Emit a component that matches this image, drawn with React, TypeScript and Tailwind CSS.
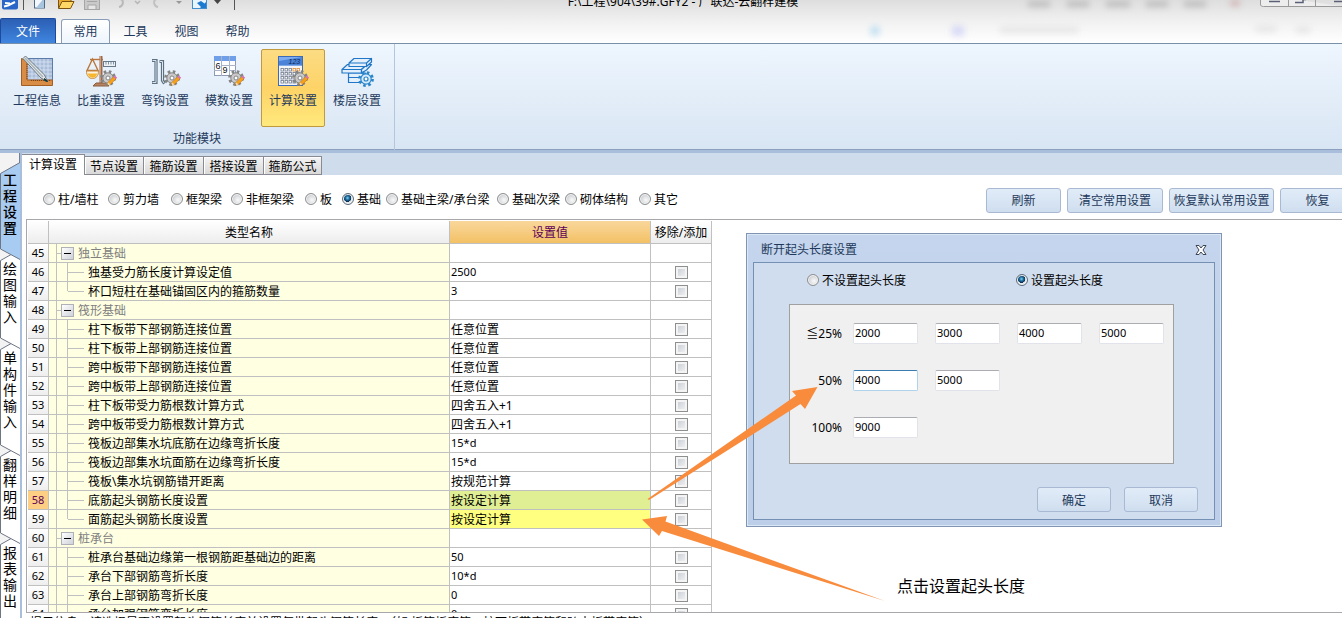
import { useState } from "react";
import type { ReactNode } from "react";
import { clsx } from "clsx";

const UI_FONT = "font-['Noto_Sans','Noto_Sans_CJK_SC',sans-serif]";

const MENU = ["常用", "工具", "视图", "帮助"];
const SUB_TABS = [
  { label: "计算设置", width: "w-[63px]" },
  { label: "节点设置", width: "w-[59px]" },
  { label: "箍筋设置", width: "w-[60px]" },
  { label: "搭接设置", width: "w-[60px]" },
  { label: "箍筋公式", width: "w-[58px]" },
];
const CATEGORIES = [
  "柱/墙柱",
  "剪力墙",
  "框架梁",
  "非框架梁",
  "板",
  "基础",
  "基础主梁/承台梁",
  "基础次梁",
  "砌体结构",
  "其它",
];

const SIDE_TABS = [
  { label: "工程设置", height: 98 },
  { label: "绘图输入", height: 100 },
  { label: "单构件输入", height: 118 },
  { label: "翻样明细", height: 99 },
  { label: "报表输出", height: 110 },
];

type Row = {
  no: number;
  name: string;
  value?: string;
  group?: boolean;
  last?: boolean;
  mark?: "green" | "yellow";
};

const ROWS: Row[] = [
  { no: 45, name: "独立基础", group: true },
  { no: 46, name: "独基受力筋长度计算设定值", value: "2500" },
  { no: 47, name: "杯口短柱在基础锚固区内的箍筋数量", value: "3", last: true },
  { no: 48, name: "筏形基础", group: true },
  { no: 49, name: "柱下板带下部钢筋连接位置", value: "任意位置" },
  { no: 50, name: "柱下板带上部钢筋连接位置", value: "任意位置" },
  { no: 51, name: "跨中板带下部钢筋连接位置", value: "任意位置" },
  { no: 52, name: "跨中板带上部钢筋连接位置", value: "任意位置" },
  { no: 53, name: "柱下板带受力筋根数计算方式", value: "四舍五入+1" },
  { no: 54, name: "跨中板带受力筋根数计算方式", value: "四舍五入+1" },
  { no: 55, name: "筏板边部集水坑底筋在边缘弯折长度", value: "15*d" },
  { no: 56, name: "筏板边部集水坑面筋在边缘弯折长度", value: "15*d" },
  { no: 57, name: "筏板\\集水坑钢筋错开距离", value: "按规范计算" },
  { no: 58, name: "底筋起头钢筋长度设置", value: "按设定计算", mark: "green" },
  { no: 59, name: "面筋起头钢筋长度设置", value: "按设定计算", mark: "yellow", last: true },
  { no: 60, name: "桩承台", group: true },
  { no: 61, name: "桩承台基础边缘第一根钢筋距基础边的距离", value: "50" },
  { no: 62, name: "承台下部钢筋弯折长度", value: "10*d" },
  { no: 63, name: "承台上部钢筋弯折长度", value: "0" },
  { no: 64, name: "承台加强钢筋弯折长度", value: "0" },
];

/* ---------- small controls ---------- */

function Radio({
  label,
  name,
  checked,
  onChange,
}: {
  label: string;
  name: string;
  checked: boolean;
  onChange: () => void;
}) {
  return (
    <label className="flex items-center gap-[3px] whitespace-nowrap">
      <input
        type="radio"
        name={name}
        checked={checked}
        onChange={onChange}
        className="h-3 w-3 shrink-0 appearance-none rounded-full border border-[#8e8f8f] bg-[radial-gradient(circle_at_60%_60%,#f4f4f4_10%,#bcc1c8_90%)] shadow-[inset_0_0_0_1px_#f4f4f4] checked:border-[#5b6b7c] checked:bg-[radial-gradient(circle_at_45%_40%,#7fd3f2_0%,#1b6a9c_25%,#0c2f50_45%,#e6e9ec_50%)]"
      />
      <span className="pt-0.5">{label}</span>
    </label>
  );
}

function PushButton({ children, className }: { children: ReactNode; className?: string }) {
  return (
    <button
      type="button"
      className={clsx(
        "h-[25px] shrink-0 whitespace-nowrap rounded-[3px] border border-[#a9b9d3] bg-linear-to-b from-[#e1ecf8] to-[#cfdeef] pt-0.5 text-center text-[#1e395b]",
        className,
      )}
    >
      {children}
    </button>
  );
}

/* ---------- icons ---------- */

function Gear({
  cx,
  cy,
  color = "#858585",
  fill = "#c9c9c9",
}: {
  cx: number;
  cy: number;
  color?: string;
  fill?: string;
}) {
  return (
    <g>
      <circle cx={cx} cy={cy} r="6.4" fill="none" stroke={color} strokeWidth="3" strokeDasharray="2.5 2.53" />
      <circle cx={cx} cy={cy} r="5.2" fill={fill} stroke={color} />
      <circle cx={cx} cy={cy} r="2" fill="#fff" stroke={color} />
    </g>
  );
}

function Pencil() {
  return (
    <g>
      <path d="M22 29.5l1-3.2 5.6-5.6 2.3 2.3-5.6 5.6z" fill="#f6a01c" stroke="#a8620c" strokeWidth=".5" />
      <path d="M28.6 20.7l1.3-1.3 2.3 2.3-1.3 1.3z" fill="#d871b8" />
      <path d="M22 29.5l1-3.2 2.3 2.3z" fill="#f7dfb4" />
      <path d="M22 29.5l.4-1.3.9.9z" fill="#333" />
    </g>
  );
}

function ProjectIcon() {
  const lines = [11, 15, 19, 23, 27];
  return (
    <svg viewBox="0 0 32 32" className="h-8 w-8">
      <rect x="4.5" y="2.5" width="27" height="23" fill="#a9bddb" stroke="#5b7cab" />
      {lines.map((x) => (
        <path key={x} d={`M${x} 3v20M6 ${x - 5}h25`} stroke="#dbe5f3" strokeWidth=".8" />
      ))}
      <path d="M.5 2.5L6 5v19h25.5v5.500H.5z" fill="#d98c46" stroke="#a35f22" />
      <path d="M6 8v15M10 24.5h20" stroke="#7c4516" strokeDasharray="1 1" />
      <path d="M2 2.5L4.5 0l19 19 3 6.5-6.500-3.500z" fill="#e6eaec" stroke="#6a7880" />
      <path d="M4 2l18 19" stroke="#a9b4b9" strokeWidth="1.500" />
      <path d="M23.500 22.500l3 3-2.800-.8z" fill="#123a3d" stroke="#123a3d" />
    </svg>
  );
}

function WeightIcon() {
  return (
    <svg viewBox="0 0 32 32" className="h-8 w-8 overflow-visible">
      <path d="M7.500 3L2 14.500h11z" fill="none" stroke="#b8763a" strokeWidth="1.400" />
      <path d="M5 3.500h13" stroke="#b8763a" strokeWidth="1.400" />
      <path d="M1.500 15h12c0 5-2.500 7.500-6 7.500s-6-2.500-6-7.500z" fill="#fdf3dc" stroke="#c98a3c" />
      <path d="M2.700 17.500h9.600c-.8 3-2.600 4.200-4.800 4.200s-4-1.200-4.800-4.200z" fill="#f8b62d" />
      <path d="M16 0v27" stroke="#9c6a4d" strokeWidth="3" />
      <path d="M15.300 0v27" stroke="#dba98a" />
      <path d="M8 30l3-3h10l3 3z" fill="#b8835f" stroke="#8a5a3c" />
      <rect x="18.500" y="5.500" width="12" height="5" fill="#eef2f5" stroke="#66798a" />
      <path d="M21 6v2.500M23.500 6v2.500M26 6v2.500M28.500 6v2.500" stroke="#66798a" strokeWidth=".8" />
      <Gear cx={23} cy={22} />
      <Pencil />
    </svg>
  );
}

function HookIcon() {
  return (
    <svg viewBox="0 0 32 32" className="h-8 w-8 overflow-visible">
      <path d="M3 4.500h4v22H3" fill="none" stroke="#5d7183" strokeWidth="3.200" />
      <path d="M3.500 4.500h3.500v22H3.500" fill="none" stroke="#dde6ec" strokeWidth="1" />
      <path d="M10.500 5.500h3v19l2 3" fill="none" stroke="#5d7183" strokeWidth="3.200" />
      <path d="M11 5.500h2.500v19l1.500 2.500" fill="none" stroke="#dde6ec" strokeWidth="1" />
      <Gear cx={23} cy={22} />
      <Pencil />
    </svg>
  );
}

function ModulusIcon() {
  return (
    <svg viewBox="0 0 32 32" className="h-8 w-8 overflow-visible">
      <rect x="1.500" y=".5" width="21" height="19" fill="#fff" stroke="#8f9bb3" />
      <path d="M1 0h22v5H1z" fill="#6f9fe8" />
      <path d="M8.500 0v20M16.500 0v20M1 9.500h22M1 14.500h22" stroke="#a9b4c9" />
      <rect x="2" y="5" width="6" height="9" fill="#fff" />
      <rect x="9" y="10" width="7" height="9" fill="#fff" />
      <text x="2.500" y="12.500" fontSize="9" fill="#111" fontFamily="Liberation Sans">
        6
      </text>
      <text x="9.500" y="17" fontSize="9" fill="#111" fontFamily="Liberation Sans">
        9
      </text>
      <Gear cx={23} cy={22} />
      <Pencil />
    </svg>
  );
}

function CalcIcon() {
  const cols = [4, 8, 12, 16, 20];
  const rows = [12.5, 16.5, 20.5, 24.5];
  return (
    <svg viewBox="0 0 32 32" className="h-8 w-8 overflow-visible">
      <rect x="1.500" y=".5" width="24" height="29" fill="#f2f4f8" stroke="#3c6cb8" />
      <path d="M2 1h23v8.500H2z" fill="#7eacef" />
      <path d="M2 9.500V5l23-4v8.500z" fill="#4a83d8" />
      <text x="11.500" y="8" fontSize="7" fontStyle="italic" fill="#0f2550" fontFamily="Liberation Sans">
        123
      </text>
      {rows.map((y) =>
        cols.map((x) => (
          <rect
            key={`${x}-${y}`}
            x={x}
            y={y}
            width="2.500"
            height="2.500"
            fill="#fff"
            stroke={x > 13 && y < 15 ? "#e08a2e" : "#6f7a8c"}
            strokeWidth=".8"
          />
        )),
      )}
      <Gear cx={23} cy={22} />
      <Pencil />
    </svg>
  );
}

function FloorIcon() {
  return (
    <svg
      viewBox="0 0 32 32"
      className="h-8 w-8 overflow-visible"
      fill="#e3f0fc"
      stroke="#2176c7"
      strokeWidth="1.200"
      strokeLinejoin="round"
    >
      <path d="M7.500 21.500h17v5h-17zM7.500 17h17v4.500h-17z" />
      <path d="M1 13.500l5.500-5h19.500l-5.500 5zM1 13.500h19.500V17H1z" />
      <path d="M20.500 13.500l5.500-5h4.500l-5 5.500-5 3z" />
      <path d="M8 7l5-4.500h17.500l-5 4.500zM8 7h17.500v3.500H8zM25.500 7l5-4.500V6l-5 4.500z" />
      <Gear cx={25} cy={23} color="#2b86c9" fill="#d7ecfb" />
    </svg>
  );
}

const RIBBON = [
  { label: "工程信息", icon: <ProjectIcon /> },
  { label: "比重设置", icon: <WeightIcon /> },
  { label: "弯钩设置", icon: <HookIcon /> },
  { label: "模数设置", icon: <ModulusIcon /> },
  { label: "计算设置", icon: <CalcIcon /> },
  { label: "楼层设置", icon: <FloorIcon /> },
];

function QuickAccess() {
  return (
    <svg width="236" height="16" viewBox="0 0 236 16" className="shrink-0">
      {/* app badge */}
      <rect x="2" y="-2" width="16" height="17.500" rx="2" fill="#2a66c8" />
      <path d="M4 12.500l4-1 7-3.500M5 9l5 .5" fill="none" stroke="#fff" strokeWidth="2" />
      <path d="M23.500 0v16" stroke="#555" />
      {/* new */}
      <rect x="34.500" y="0" width="10" height="14" fill="#f4f8fc" stroke="#4d6a8c" />
      <path d="M44 4v10h-8z" fill="#a9c4df" />
      {/* open */}
      <path d="M58.500 14V3h5l1.500 2h6v3" fill="#e9a92c" stroke="#7a5310" />
      <path d="M58.500 14.500L62 7.500h12l-3.500 7z" fill="#ffd766" stroke="#7a5310" />
      {/* save, greyed out */}
      <rect x="84.500" y="0" width="15" height="15.500" fill="#c9c9c9" stroke="#a6a6a6" />
      <path d="M88 15v-4h8v4M87 7.500h10" fill="#e6e6e6" stroke="#a6a6a6" />
      {/* undo, redo */}
      <path d="M114 5h6c4 0 4 7-1 8" fill="none" stroke="#b9b9b9" strokeWidth="2" />
      <path d="M135 7l2.500 2.500L140 7" fill="none" stroke="#b5b5b5" strokeWidth="1.500" />
      <path d="M162 5h-5c-4 0-4 7 1 8" fill="none" stroke="#c1c1c1" strokeWidth="2" />
      <path d="M176 7h6l-3 3z" fill="#999" />
      {/* sync */}
      <rect x="192.500" y="2" width="14" height="12.500" fill="#e9f4fd" stroke="#3e8ed0" />
      <path d="M197 9l4 4-1 1h6v-6l-1.500 1.500L201 7z" fill="#1c7bd0" />
      <path d="M214 6h7l-3.500 4z" fill="#444" />
      <path d="M234.500 0v16" stroke="#555" />
    </svg>
  );
}

function WindowControls() {
  return (
    <svg width="212" height="32" viewBox="0 0 212 32" className="shrink-0">
      <path d="M130.500 8v10c0 2 1 2.500 3 2.500H212" fill="#ededed" stroke="#9a9a9a" />
      <path d="M158.500 8v12M185.500 8v12" stroke="#9a9a9a" />
      <path d="M139 15.500h11M165 16.500h8v-3h3" fill="none" stroke="#5a6078" strokeWidth="1.500" />
      <path d="M204 15.500h8" stroke="#5a6078" strokeWidth="1.500" />
    </svg>
  );
}

/* ---------- page parts ---------- */

function Header() {
  return (
    <header className="relative shrink-0 overflow-hidden border-b border-[#7890a8] bg-linear-to-b from-[#dedede] via-[#f1f1f1] to-white">
      {/* glass blur of what lies behind the window */}
      <svg
        className="pointer-events-none absolute inset-y-0 right-0 h-[43px] w-[472px] blur-[3px]"
        viewBox="0 0 472 43"
      >
        <path d="M158 4h22M197 4h22M236 4h24M276 4h22M314 4h22" stroke="#9a9a9a" strokeWidth="6" opacity=".5" />
        <circle cx="365" cy="2" r="5" fill="#c99" opacity=".6" />
        <circle cx="5" cy="31" r="5" fill="#9cd0ee" opacity=".6" />
        <rect x="82" y="26" width="12" height="10" fill="#b9bdf5" opacity=".5" />
        <path d="M130 30h78M386 29h20M426 30h14" stroke="#ccc" strokeWidth="6" opacity=".4" />
      </svg>
      <div className="-mt-[14px] flex h-8 items-center">
        <QuickAccess />
        <h1 className="flex-1 whitespace-nowrap text-center text-black">
          F:\工程\904\39#.GFY2 - 广联达-云翻样建模
        </h1>
        <WindowControls />
      </div>
      <nav className="relative flex h-[25px] items-end">
        <button
          type="button"
          className="mr-[5px] h-[25px] w-14 rounded-t-[2px] border border-b-0 border-[#1d4a9c] bg-linear-to-b from-[#2c5fb4] to-[#3f86e0] pt-px text-white"
        >
          文件
        </button>
        {MENU.map((item, i) => (
          <button
            key={item}
            type="button"
            className={clsx(
              "h-6 pt-px text-[#1e395b]",
              i === 0
                ? "w-[49px] rounded-t-[3px] border border-b-0 border-[#8a9db8] bg-linear-to-b from-white to-[#eef5fd]"
                : "w-[51px]",
            )}
          >
            {item}
          </button>
        ))}
      </nav>
    </header>
  );
}

function Ribbon() {
  return (
    <section className="flex h-[109px] shrink-0 border-b-[3px] border-[#a9bedb] bg-linear-to-b from-[#eef6fe] to-[#d8e5f3] text-[#1e395b] shadow-[inset_0_-1px_0_#8ba0bf]">
      <div className="flex flex-col items-center border-r border-[#b4c6dc] px-[5px] pt-[5px]">
        <div className="flex">
          {RIBBON.map(({ label, icon }) => (
            <button
              key={label}
              type="button"
              className={clsx(
                "flex h-[78px] w-16 flex-col items-center gap-[5px] rounded-[2px] border pt-1.5",
                label === "计算设置"
                  ? "border-[#c29a3e] bg-linear-to-b from-[#fcdc83] via-[#fdd367] to-[#ffe97d]"
                  : "border-transparent",
              )}
            >
              {icon}
              <span className="leading-4">{label}</span>
            </button>
          ))}
        </div>
        <div className="pt-1 leading-4">功能模块</div>
      </div>
    </section>
  );
}

function SideTabs() {
  return (
    <nav className="flex w-[22px] shrink-0 flex-col overflow-hidden border-r-2 border-[#a9bedb] bg-[#f3f3f3] pt-[9px] shadow-[inset_-1px_0_0_#77808f]">
      {SIDE_TABS.map(({ label, height: h }, i) => {
        const active = i === 0;
        return (
          <button
            key={label}
            type="button"
            className={clsx(
              "relative flex w-5 shrink-0 items-start px-[3px] text-sm leading-4 text-black",
              active ? "pt-2.5 font-medium" : "-mt-[11px] pt-3",
            )}
            style={{ height: h, zIndex: SIDE_TABS.length - i }}
          >
            <svg className="absolute inset-0 h-full w-full" viewBox={`0 0 20 ${h}`}>
              <path
                d={`M20 .5L.5 11.500V${h - 11}L20 ${h - 0.5}`}
                fill={active ? "#a8cbf1" : "#fff"}
                stroke="#6d7685"
              />
            </svg>
            <span className="relative block break-all">{label}</span>
          </button>
        );
      })}
    </nav>
  );
}

function TreeCell({ row }: { row: Row }) {
  if (row.group) {
    return (
      <div className="flex h-[18px] items-center text-[#808080]">
        <span className="h-[18px] w-2 shrink-0 border-r border-[#c0c0c0]" />
        <span className="w-1 shrink-0 border-t border-[#c0c0c0]" />
        <button
          type="button"
          aria-label={`折叠${row.name}`}
          className="mr-1 flex h-[13px] w-[13px] shrink-0 items-center justify-center border border-[#b0b0b8] bg-linear-to-br from-white to-[#cfd2da]"
        >
          <span className="h-px w-[7px] bg-black" />
        </button>
        <span className="pt-0.5">{row.name}</span>
      </div>
    );
  }
  return (
    <div className="flex h-[18px] items-center">
      <span className="h-[18px] w-2 shrink-0 border-r border-[#c0c0c0]" />
      <span className="w-2.5 shrink-0" />
      <span className={clsx("w-px shrink-0 bg-[#c0c0c0]", row.last ? "h-[9px] self-start" : "h-[18px]")} />
      <span className="mr-1 w-4 shrink-0 border-t border-[#c0c0c0]" />
      <span className="whitespace-nowrap pt-0.5">{row.name}</span>
    </div>
  );
}

function SettingsTable() {
  const cell = "border-b border-r border-[#c0c0c0]";
  return (
    <table className="w-[684px] table-fixed border-separate border-spacing-0 leading-4">
      <colgroup>
        <col className="w-[21px]" />
        <col className="w-[401px]" />
        <col className="w-[201px]" />
        <col className="w-[61px]" />
      </colgroup>
      <thead>
        <tr className="h-[23px] bg-linear-to-b from-white to-[#ececec]">
          <th className={clsx(cell, "p-0")} aria-label="序号" />
          <th className={clsx(cell, "px-0 pb-0 pt-0.5 font-normal")}>类型名称</th>
          <th
            className={clsx(
              cell,
              "bg-linear-to-b from-[#f9d79b] to-[#f3c164] px-0 pb-0 pt-0.5 font-normal text-[#5c0058]",
            )}
          >
            设置值
          </th>
          <th className={clsx(cell, "whitespace-nowrap px-0 pb-0 pt-0.5 font-normal")}>移除/添加</th>
        </tr>
      </thead>
      <tbody>
        {ROWS.map((row) => (
          <tr key={row.no} className="h-[19px]">
            <td
              className={clsx(
                cell,
                "p-0 text-center text-[11px]",
                row.no === 58 ? "bg-[#fdcf84] text-[#5c0058]" : "bg-linear-to-b from-white to-[#eeeeee]",
              )}
            >
              {row.no}
            </td>
            <td className={clsx(cell, "bg-[#ffffe1] p-0")}>
              <TreeCell row={row} />
            </td>
            <td
              className={clsx(
                cell,
                "pb-0 pl-px pr-0",
                row.mark === "green" && "bg-[#e0ef93]",
                row.mark === "yellow" && "bg-[#ffff80]",
                /^\d/.test(row.value ?? "") ? "pt-0 text-[11px]" : "pt-0.5",
              )}
            >
              {row.value}
            </td>
            <td className={clsx(cell, "p-0")}>
              {!row.group && (
                <input
                  type="checkbox"
                  aria-label={row.name}
                  className="mx-auto block h-[13px] w-[13px] appearance-none border border-[#8e8f8f] bg-linear-to-br from-[#c4cad2] to-[#f6f6f6] shadow-[inset_0_0_0_2px_#f4f4f4]"
                />
              )}
            </td>
          </tr>
        ))}
      </tbody>
    </table>
  );
}

const LENGTHS = [
  { label: "≦25%", values: ["2000", "3000", "4000", "5000"] },
  { label: "50%", values: ["4000", "5000"] },
  { label: "100%", values: ["9000"] },
];

function LengthDialog() {
  const [enabled, setEnabled] = useState(true);
  return (
    <div
      role="dialog"
      aria-label="断开起头长度设置"
      className="absolute left-[746px] top-[233px] w-[476px] border border-[#8095b2] bg-linear-to-b from-[#c4d5ed] to-[#bccee8] px-1.5 pb-1.5 text-black shadow-[inset_0_0_0_1px_#dbe7f5]"
    >
      <div className="flex h-7 items-center justify-between pl-2 pr-1 pt-1 text-[#1e395b]">
        <h2>断开起头长度设置</h2>
        <button type="button" aria-label="关闭" className="p-1">
          <svg viewBox="0 0 12 10" className="h-2.5 w-3">
            <path d="M1 .5h3l2 2.500 2-2.500h3L8 5l3 4.500H8L6 7 4 9.500H1L4 5z" fill="#fff" stroke="#3d4654" />
          </svg>
        </button>
      </div>
      <div className="border border-[#7590b5] bg-[#d0ddee] pb-[7px]">
        <div className="flex h-[41px] items-center pb-2 pl-[53px]">
          <div className="w-[209px]">
            <Radio name="head-length" label="不设置起头长度" checked={!enabled} onChange={() => setEnabled(false)} />
          </div>
          <Radio name="head-length" label="设置起头长度" checked={enabled} onChange={() => setEnabled(true)} />
        </div>
        <fieldset className="ml-[35px] mr-10 flex h-40 flex-col gap-[26px] border border-[#a0a0a0] bg-[#f0f0f0] pt-[18px]">
          {LENGTHS.map(({ label, values }) => (
            <div key={label} className="flex items-center gap-[17px]">
              <span className="-mr-1.5 w-[52px] text-right">{label}</span>
              {values.map((v, i) => (
                <input
                  key={i}
                  type="text"
                  defaultValue={v}
                  aria-label={`${label} 第${i + 1}批`}
                  className={clsx(
                    "h-[21px] w-[65px] rounded-[2px] border bg-white px-px pb-0.5 text-[11px]",
                    label === "50%" && i === 0
                      ? "border-[#b0d2ea] border-t-[#3d7bad]"
                      : "border-[#e2e3ea] border-t-[#abadb3]",
                  )}
                />
              ))}
            </div>
          ))}
        </fieldset>
        <div className="flex justify-end gap-[13px] pr-4 pt-[23px]">
          <PushButton className="w-[74px]">确定</PushButton>
          <PushButton className="w-[74px]">取消</PushButton>
        </div>
      </div>
    </div>
  );
}

function Annotations() {
  return (
    <>
      <svg
        className="pointer-events-none absolute left-0 top-0 h-[618px] w-[1342px]"
        viewBox="0 0 1342 618"
        fill="#f98b3c"
      >
        <path d="M647.500 499L796 395.500 792 391 817.500 387 805 409 800.500 404 649 500z" />
        <path d="M642 519.500L667 516 665.500 521.500 885 601 662 531 659 536z" />
      </svg>
      <p className="absolute left-[897px] top-[574px] text-base leading-6 text-black">点击设置起头长度</p>
    </>
  );
}

export default function App() {
  const [category, setCategory] = useState("基础");

  return (
    <div className={clsx("relative flex h-screen flex-col overflow-hidden bg-white text-xs text-black", UI_FONT)}>
      <Header />
      <Ribbon />
      <div className="flex min-h-0 flex-1">
        <SideTabs />
        <main className="flex min-w-0 flex-1 flex-col">
          <div className="flex h-[22px] shrink-0 items-end bg-[#cfdcec]">
            {SUB_TABS.map(({ label, width }, i) => (
              <button
                key={label}
                type="button"
                className={clsx(
                  "whitespace-nowrap border-r border-t border-[#8a8a94] text-center",
                  width,
                  i === 0
                    ? "h-[21px] bg-white"
                    : "h-[19px] border-b bg-linear-to-b from-[#f4f4f4] to-[#d9d9d9] pt-0.5 shadow-[inset_1px_1px_0_#fff]",
                )}
              >
                {label}
              </button>
            ))}
          </div>

          <div className="flex h-11 shrink-0 items-center overflow-hidden pl-[21px] pt-1">
            <div className="grid grid-cols-[65px_63px_60px_74px_37px_44px_111px_68px_74px_auto]">
              {CATEGORIES.map((c) => (
                <Radio key={c} name="category" label={c} checked={c === category} onChange={() => setCategory(c)} />
              ))}
            </div>
            <div className="-mr-[13px] ml-auto flex gap-1.5 pt-0.5">
              <PushButton className="w-[75px]">刷新</PushButton>
              <PushButton className="w-24">清空常用设置</PushButton>
              <PushButton className="w-[105px]">恢复默认常用设置</PushButton>
              <PushButton className="w-[75px]">恢复</PushButton>
            </div>
          </div>

          <div className="ml-1 min-h-0 flex-1 overflow-hidden border border-r-0 border-[#a8a8ac] pl-px pt-px">
            <SettingsTable />
          </div>
          <p className="h-[5px] shrink-0 overflow-hidden whitespace-nowrap pl-2 pt-0.5 leading-4">
            提示信息：请选择是否设置起头钢筋长度并设置每批起头钢筋长度。（如 板筋板底筋、柱下板带底筋和跨中板带底筋）
          </p>
        </main>
      </div>

      <LengthDialog />
      <Annotations />
    </div>
  );
}
